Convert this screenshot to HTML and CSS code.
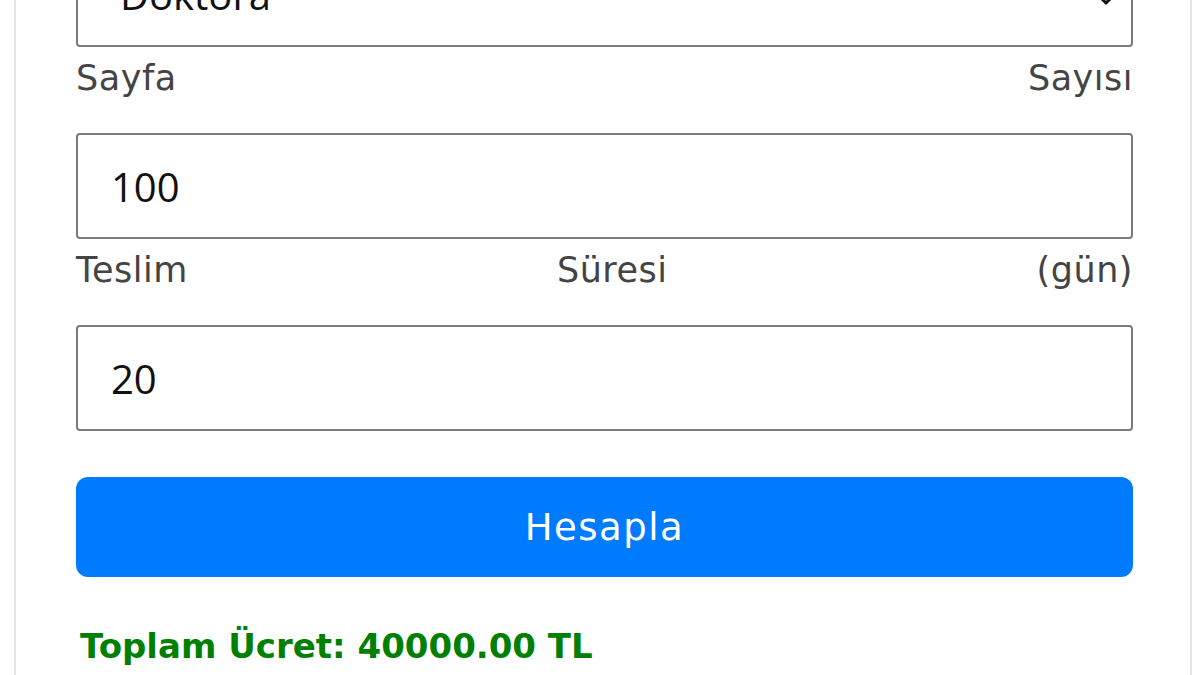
FILE: index.html
```html
<!DOCTYPE html>
<html lang="tr">
<head>
    <meta charset="UTF-8">
    <meta name="viewport" content="width=device-width, initial-scale=1.0">
    <title>Tez Ücreti Hesaplama</title>

    <link rel="stylesheet" href="styles.css">
</head>
<body>
    <div class="calculator">
        <div class="select-wrap">
            <select id="level" class="field field-select">
                <option>Doktora</option>
            </select>
            <svg class="chevron" width="16" height="10" viewBox="0 0 16 10">
                <path d="M2 2 L8 8 L14 2" fill="none" stroke="#111" stroke-width="3" stroke-linecap="round" stroke-linejoin="round"/>
            </svg>
        </div>

        <label class="field-label" for="pages">Sayfa Sayısı</label>
        <input id="pages" class="field" type="number" value="100">

        <label class="field-label" for="days">Teslim Süresi (gün)</label>
        <input id="days" class="field" type="number" value="20">

        <button class="calc-button">Hesapla</button>

        <p class="result">Toplam Ücret: 40000.00 TL</p>
    </div>
</body>
</html>
```

FILE: styles.css
```css
body {
    font-family: 'DejaVu Sans', 'Open Sans', sans-serif;
    margin: 0;
    padding: 0;
    background-color: #fff;
    color: #444;
    overflow: hidden;
}

.calculator {
    display: flex;
    flex-direction: column;
    width: 1178px;
    box-sizing: border-box;
    margin: -101px 0 0 14px;
    padding: 40px 57px 40px 60px;
    border: 2px solid #e4e4e4;
}

.select-wrap {
    position: relative;
}

.chevron {
    position: absolute;
    right: 19px;
    top: 54px;
    pointer-events: none;
}

.field {
    height: 106px;
    box-sizing: border-box;
    width: 100%;
    padding: 0 33px;
    font-family: 'Open Sans', 'Noto Sans', sans-serif;
    font-size: 40px;
    color: #111;
    background-color: #fff;
    border: 2px solid #7a7a7a;
    border-radius: 4px;
    outline: none;
    -moz-appearance: textfield;
}

.field::-webkit-outer-spin-button,
.field::-webkit-inner-spin-button {
    -webkit-appearance: none;
    margin: 0;
}

.field-select {
    appearance: none;
    -webkit-appearance: none;
    padding-left: 42px;
}

.field-label {
    display: block;
    margin: 4px 0 28px;
    font-size: 35px;
    line-height: 54px;
    letter-spacing: 0.5px;
    text-align: justify;
    text-align-last: justify;
    color: #444;
}

.calc-button {
    margin-top: 46px;
    height: 100px;
    border: none;
    border-radius: 12px;
    background-color: #007bff;
    color: #fff;
    font-family: 'DejaVu Sans', 'Open Sans', sans-serif;
    font-size: 37px;
    letter-spacing: 1.5px;
    cursor: pointer;
}

.result {
    margin: 42px 0 0 4px;
    font-size: 34px;
    line-height: 54px;
    font-weight: bold;
    color: #008000;
}
```
